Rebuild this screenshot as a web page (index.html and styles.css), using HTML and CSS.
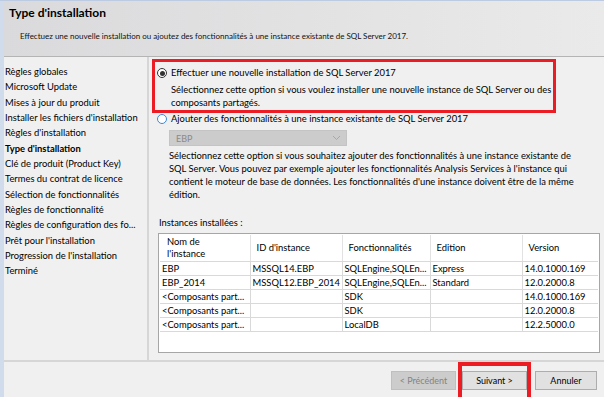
FILE: index.html
```html
<!DOCTYPE html>
<html lang="fr">
<head>
    <meta charset="UTF-8">
    <title>Type d'installation</title>
    <link rel="stylesheet" href="styles.css">
</head>
<body>
    <div class="window">
        <div class="stripe"></div>
        <div class="frame">
            <header class="header">
                <h1>Type d'installation</h1>
                <p class="subtitle">Effectuez une nouvelle installation ou ajoutez des fonctionnalités à une instance existante de SQL Server 2017.</p>
            </header>

            <div class="body">
                <ul class="steps">
                    <li>Règles globales</li>
                    <li>Microsoft Update</li>
                    <li>Mises à jour du produit</li>
                    <li>Installer les fichiers d'installation</li>
                    <li>Règles d'installation</li>
                    <li class="current">Type d'installation</li>
                    <li>Clé de produit (Product Key)</li>
                    <li>Termes du contrat de licence</li>
                    <li>Sélection de fonctionnalités</li>
                    <li>Règles de fonctionnalité</li>
                    <li>Règles de configuration des fo...</li>
                    <li>Prêt pour l'installation</li>
                    <li>Progression de l'installation</li>
                    <li>Terminé</li>
                </ul>

                <main class="content">
                    <div class="option highlight">
                        <label class="radio-row">
                            <span class="radio checked"></span>
                            Effectuer une nouvelle installation de SQL Server 2017
                        </label>
                        <p class="desc">Sélectionnez cette option si vous voulez installer une nouvelle instance de SQL Server ou des composants partagés.</p>
                    </div>

                    <div class="option second">
                        <label class="radio-row">
                            <span class="radio focus"></span>
                            Ajouter des fonctionnalités à une instance existante de SQL Server 2017
                        </label>
                        <div class="select">
                            <span>EBP</span>
                            <svg width="9" height="6" viewBox="0 0 9 6"><polyline points="1,1 4.5,4.5 8,1" fill="none" stroke="#a8a8a8" stroke-width="1"/></svg>
                        </div>
                        <p class="desc">Sélectionnez cette option si vous souhaitez ajouter des fonctionnalités à une instance existante de SQL Server. Vous pouvez par exemple ajouter les fonctionnalités Analysis Services à l'instance qui contient le moteur de base de données. Les fonctionnalités d'une instance doivent être de la même édition.</p>
                    </div>

                    <div class="instances-label">Instances installées :</div>
                    <div class="listview">
                        <table>
                            <thead>
                                <tr>
                                    <th class="c1">Nom de<br>l'instance</th>
                                    <th class="c2">ID d'instance</th>
                                    <th class="c3">Fonctionnalités</th>
                                    <th class="c4">Edition</th>
                                    <th class="c5">Version</th>
                                </tr>
                            </thead>
                            <tbody>
                                <tr><td>EBP</td><td>MSSQL14.EBP</td><td>SQLEngine,SQLEn...</td><td>Express</td><td>14.0.1000.169</td></tr>
                                <tr><td>EBP_2014</td><td>MSSQL12.EBP_2014</td><td>SQLEngine,SQLEn...</td><td>Standard</td><td>12.0.2000.8</td></tr>
                                <tr><td>&lt;Composants part...</td><td></td><td>SDK</td><td></td><td>14.0.1000.169</td></tr>
                                <tr><td>&lt;Composants part...</td><td></td><td>SDK</td><td></td><td>12.0.2000.8</td></tr>
                                <tr><td>&lt;Composants part...</td><td></td><td>LocalDB</td><td></td><td>12.2.5000.0</td></tr>
                            </tbody>
                        </table>
                    </div>
                </main>
            </div>

            <footer class="footer">
                <button class="btn" disabled>&lt; Précédent</button>
                <button class="btn next">Suivant &gt;</button>
                <button class="btn cancel">Annuler</button>
            </footer>
        </div>
    </div>
</body>
</html>
```

FILE: styles.css
```css
* {
    margin: 0;
    padding: 0;
    box-sizing: border-box;
}

body {
    font-family: Lato, "Noto Sans", sans-serif;
    font-size: 9.4px;
    color: #000;
    background: #f0f0f0;
    width: 604px;
    height: 397px;
    overflow: hidden;
}

.window {
    display: flex;
    height: 397px;
    border-top: 1px solid #bccbe2;
}

.stripe {
    width: 4px;
    background: #d0dcec;
}

.frame {
    flex: 1;
    display: flex;
    flex-direction: column;
}

.header {
    height: 56px;
    background: linear-gradient(90deg, #dadadc 0%, #e2e2e3 50%, #eaeaea 100%);
    border-bottom: 1px solid #b4b4b4;
    padding: 4px 0 0 5px;
}

.header h1 {
    font-size: 12px;
    font-weight: 700;
    line-height: 16px;
}

.subtitle {
    margin: 8px 0 0 11px;
    font-size: 8px;
    line-height: 14px;
    color: #111;
}

.body {
    height: 305px;
    display: flex;
    border-bottom: 2px solid #d6d6d6;
}

.steps {
    list-style: none;
    width: 145px;
    border-right: 2px solid #d6d6d6;
    padding: 7px 0 0 1px;
}

.steps li {
    line-height: 15.35px;
    white-space: nowrap;
}

.steps .current {
    font-weight: 700;
}

.content {
    flex: 1;
    padding: 5px 0 0 4px;
}

.option.highlight {
    width: 398px;
    height: 48px;
    margin-left: 2px;
    padding: 4px 0 0 2px;
    outline: 3px solid #ec1c24;
}

.radio-row {
    display: flex;
    align-items: center;
    gap: 4px;
    line-height: 14px;
    white-space: nowrap;
}

.radio {
    width: 10px;
    height: 10px;
    border-radius: 50%;
    border: 1px solid #333;
    background: #fff;
    display: inline-flex;
    align-items: center;
    justify-content: center;
}

.radio.checked::after {
    content: "";
    width: 5px;
    height: 5px;
    border-radius: 50%;
    background: #333;
}

.radio.focus {
    border-color: #3b86d9;
}

.desc {
    margin: 3px 0 0 14px;
    line-height: 13px;
    width: 390px;
}

.option.second {
    margin: 2px 0 0 4px;
}

.option.second .desc {
    margin-left: 12px;
    width: 412px;
}

.select {
    margin: 4px 0 0 12px;
    width: 178px;
    height: 16px;
    background: #cccccc;
    border: 1px solid #c4c4c4;
    display: flex;
    align-items: center;
    justify-content: space-between;
    padding: 0 5px 0 6px;
    color: #8a8a8a;
    font-size: 9px;
}

.instances-label {
    margin: 15px 0 0 6px;
    line-height: 14px;
}

.listview {
    margin: 3px 0 0 5px;
    width: 442px;
    height: 120px;
    background: #fff;
    border: 1px solid #a6a6a6;
    padding: 1px;
}

table {
    border-collapse: collapse;
    width: 438px;
    table-layout: fixed;
}

th {
    font-weight: 400;
    text-align: left;
    height: 26px;
    padding: 0 0 0 6px;
    line-height: 12px;
    border-right: 1px solid #e2e2e2;
    border-bottom: 1px solid #d9d9d9;
}

th.c1 { width: 90px; padding-left: 7px; }
th.c2 { width: 92px; }
th.c3 { width: 88px; }
th.c4 { width: 92px; }
th.c5 { border-right: none; }

td {
    height: 14px;
    padding: 0 0 0 2px;
    white-space: nowrap;
    overflow: hidden;
    line-height: 13px;
    border-right: 1px solid #d9d9d9;
    border-bottom: 1px solid #d9d9d9;
}

td:last-child {
    border-right: none;
}

.footer {
    flex: 1;
    display: flex;
    justify-content: flex-end;
    align-items: flex-start;
    padding: 9px 7px 0 0;
    gap: 6px;
}

.btn {
    font-family: inherit;
    font-size: 9px;
    height: 19px;
    width: 65px;
    background: #e1e1e1;
    border: 1px solid #adadad;
    color: #000;
}

.btn:disabled {
    background: #cccccc;
    border-color: #bfbfbf;
    color: #838383;
}

.btn.next {
    position: relative;
}

/* red annotation frame drawn over the screenshot */
.btn.next::after {
    content: "";
    position: absolute;
    top: -10px;
    left: -5px;
    right: -5px;
    bottom: -12px;
    border: 4px solid #ec1c24;
}

.btn.cancel {
    margin-left: 2px;
    width: 62px;
}
```
